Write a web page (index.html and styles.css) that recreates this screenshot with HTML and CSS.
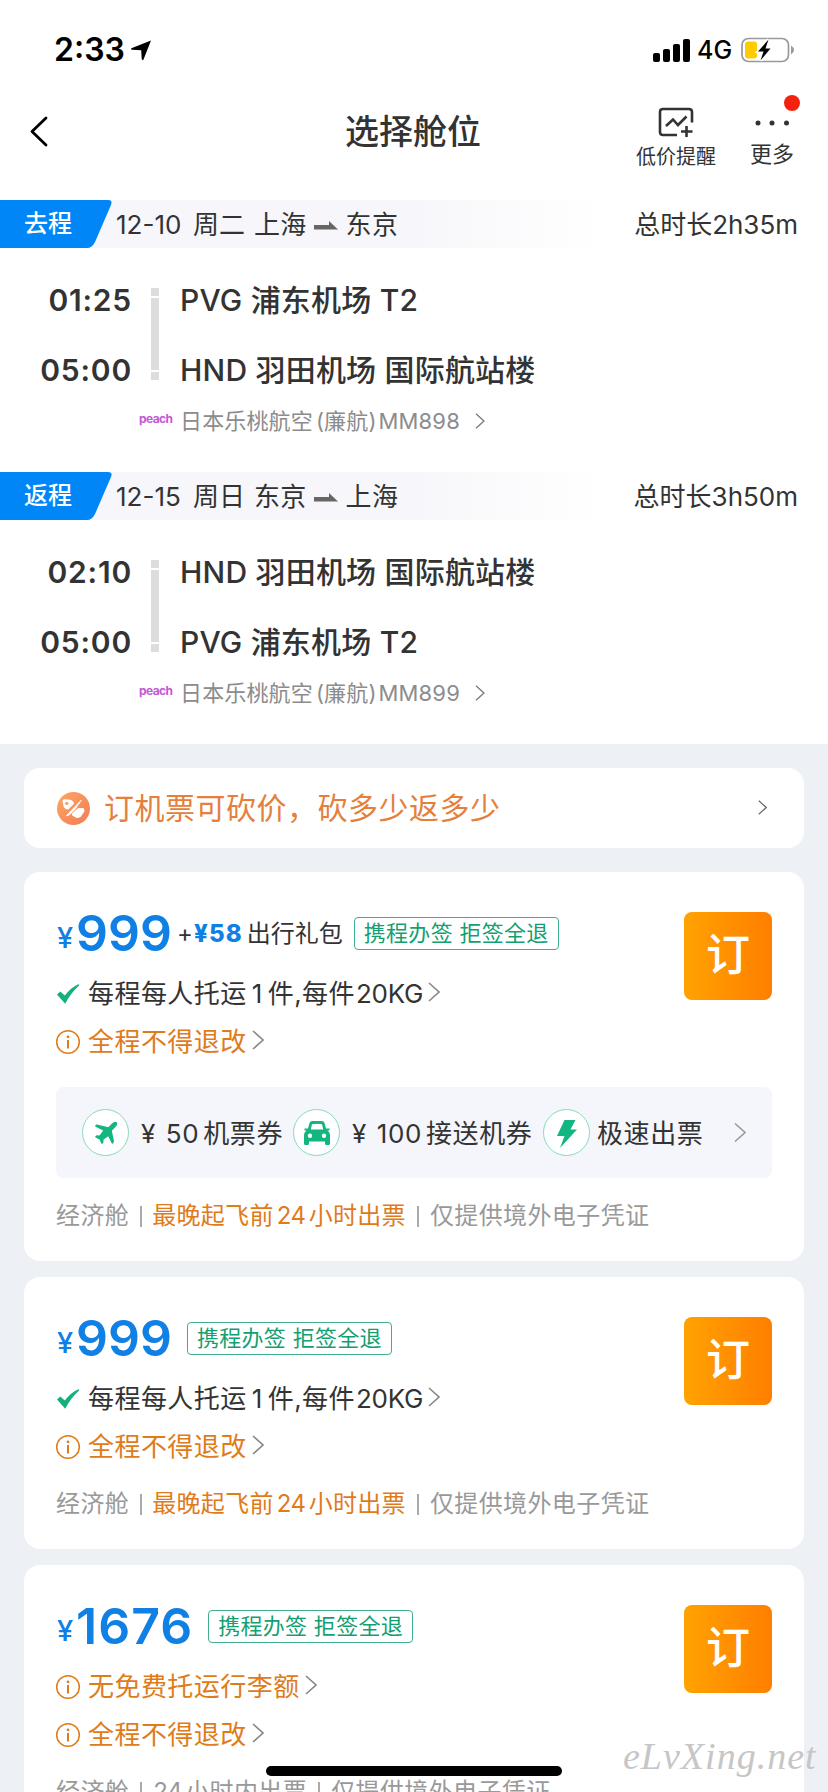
FILE: index.html
```html
<!DOCTYPE html>
<html lang="zh-CN">
<head>
<meta charset="utf-8">
<title>选择舱位</title>
<link rel="stylesheet" href="styles.css">
</head>
<body>
<svg class="defs" width="0" height="0">
  <symbol id="chev" viewBox="0 0 12 20"><path d="M1 1L11 10L1 19" fill="none" stroke="currentColor" stroke-width="1.6"/></symbol>
  <symbol id="info" viewBox="0 0 26 26"><circle cx="13" cy="13" r="11.3" fill="none" stroke="currentColor" stroke-width="1.5"/><circle cx="13" cy="7.8" r="1.4" fill="currentColor"/><path d="M13 11V19.5" stroke="currentColor" stroke-width="2"/></symbol>
  <symbol id="check" viewBox="0 0 22 20"><path d="M0 10.500L3.300 7.500L7.800 11.500C11 7 16 2.600 21.800 0L22 1.500C16.500 6.500 12 12.500 8.200 19.700Z" fill="#13b07c"/></symbol>
  <symbol id="arrow" viewBox="0 0 24 9"><path d="M0 4H15V0L24 8.500H0Z" fill="#666"/></symbol>
  <symbol id="track" viewBox="0 0 8 92"><path d="M0 0H8V8H0ZM0 10H8V82H0ZM0 84H8V92H0Z" fill="#ddd"/></symbol>
</svg>
<div class="screen">
  <div class="status">
    <span class="clock">2:33</span>
    <svg class="loc" viewBox="0 0 20 20"><path d="M20 0.500L12.500 19.500Q11.500 21 10.700 19L10.200 10.300L1 9.800Q-1 9 1 8Z"/></svg>
    <svg class="signal" viewBox="0 0 37 23"><rect x="0" y="14" width="7" height="9" rx="2"/><rect x="10" y="10" width="7" height="13" rx="2"/><rect x="20" y="5" width="7" height="18" rx="2"/><rect x="30" y="0" width="7" height="23" rx="2"/></svg>
    <span class="net">4G</span>
    <svg class="battery" viewBox="0 0 54 26"><rect x="1" y="1.500" width="46.500" height="23" rx="6.500" fill="none" stroke="#999" stroke-width="1.700"/><path d="M50 8.500Q53 10.500 53 13T50 17.500Z" fill="#999"/><rect x="4" y="4.500" width="12" height="17" rx="3" fill="#fc0"/><path d="M27.500 2.500L17 14.500H22.500L19.500 23.500L29.500 11.500H24.500Z" fill="#000" stroke="#fff" stroke-width="3" paint-order="stroke"/></svg>
  </div>
  <div class="nav">
    <svg class="back" viewBox="0 0 18 31"><path d="M16 2L2 15.500L16 29" fill="none" stroke="#000" stroke-width="2.800" stroke-linecap="round" stroke-linejoin="round"/></svg>
    <h1 class="title">选择舱位</h1>
    <div class="tool alert">
      <svg viewBox="0 0 36 30"><path d="M19 28H5Q2 28 2 25V5Q2 2 5 2H31Q34 2 34 5V15.500" fill="none" stroke="#333" stroke-width="2.600"/><path d="M8 19L15 12.500L20 18L28.500 9.500" fill="none" stroke="#333" stroke-width="2.600"/><path d="M28.500 19V30M23 24.500H34.500" stroke="#333" stroke-width="2.600"/></svg>
      <span>低价提醒</span>
    </div>
    <div class="tool more">
      <svg viewBox="0 0 36 8"><circle cx="4" cy="4" r="2.500" fill="#333"/><circle cx="18" cy="4" r="2.500" fill="#333"/><circle cx="32.500" cy="4" r="2.500" fill="#333"/></svg>
      <span>更多</span>
      <i class="dot"></i>
    </div>
  </div>

  <section class="leg">
    <div class="band">
      <div class="tag"><svg viewBox="0 0 112 48"><path d="M0 0H108Q113 0 111 5L95 42Q92 48 87 48H0Z" fill="#0086f6"/></svg><span>去程</span></div>
      <span class="date">12-10</span><span class="day">周二</span><span class="city">上海</span><svg class="arrow"><use href="#arrow"/></svg><span class="city">东京</span>
      <span class="total">总时长2h35m</span>
    </div>
    <div class="route">
      <div class="times"><span>01:25</span><span>05:00</span></div>
      <svg class="track"><use href="#track"/></svg>
      <div class="ports"><span>PVG 浦东机场 T2</span><span>HND 羽田机场 国际航站楼</span></div>
    </div>
    <div class="airline"><span class="peach">peach</span><span class="flight">日本乐桃航空<b>(廉航)</b>MM898</span><svg class="chev"><use href="#chev"/></svg></div>
  </section>

  <section class="leg">
    <div class="band">
      <div class="tag"><svg viewBox="0 0 112 48"><path d="M0 0H108Q113 0 111 5L95 42Q92 48 87 48H0Z" fill="#0086f6"/></svg><span>返程</span></div>
      <span class="date">12-15</span><span class="day">周日</span><span class="city">东京</span><svg class="arrow"><use href="#arrow"/></svg><span class="city">上海</span>
      <span class="total">总时长3h50m</span>
    </div>
    <div class="route">
      <div class="times"><span>02:10</span><span>05:00</span></div>
      <svg class="track"><use href="#track"/></svg>
      <div class="ports"><span>HND 羽田机场 国际航站楼</span><span>PVG 浦东机场 T2</span></div>
    </div>
    <div class="airline"><span class="peach">peach</span><span class="flight">日本乐桃航空<b>(廉航)</b>MM899</span><svg class="chev"><use href="#chev"/></svg></div>
  </section>

  <main class="list">
    <div class="promo">
      <svg class="coupon" viewBox="0 0 32 32"><defs><linearGradient id="cg" x1="0" y1="0" x2="1" y2="1"><stop offset="0" stop-color="#fba765"/><stop offset="1" stop-color="#f47b57"/></linearGradient></defs><circle cx="16" cy="16" r="16" fill="url(#cg)"/><path d="M5.500 9.500Q5 7 7.500 7L13 7.500Q16.500 9 16.500 11.500L11 17Q8 17 6.500 14.500Z" fill="#fff"/><circle cx="9.500" cy="11" r="1.600" fill="#f99d62"/><path d="M23.500 8L9 23L11.500 22.500L17 17.500Z" fill="#fff" stroke="#fff" stroke-width=".8"/><path d="M20.500 15.500H25.500Q27 16.500 26.500 19L23 24Q21.500 25.500 18.500 25L14.500 22.500Q14 21.500 15 20.500Z" fill="#fff"/></svg>
      <span>订机票可砍价，砍多少返多少</span>
      <svg class="chev"><use href="#chev"/></svg>
    </div>

    <article class="card">
      <button class="book">订</button>
      <div class="price"><i>¥</i><strong>999</strong><span class="gift"><span class="plus">+</span><b>¥58</b>出行礼包</span><span class="visa">携程办签 拒签全退</span></div>
      <div class="row"><svg class="check"><use href="#check"/></svg><span>每程每人托运<em>1</em>件,每件<em class="kg">20KG</em></span><svg class="chev"><use href="#chev"/></svg></div>
      <div class="row warn"><svg class="info"><use href="#info"/></svg><span>全程不得退改</span><svg class="chev"><use href="#chev"/></svg></div>
      <div class="perks">
        <div class="ring"><svg viewBox="0 0 24 24"><path d="M22.800 1.200Q24 3.500 21.500 6L17.800 9.700L20 20Q19.500 23.500 17.800 22.500L14.300 15.200L9.500 18.500L9.500 21.300Q8.500 23.500 7.300 22.500L5.500 18.500L1.500 16.500Q0.500 15 2.700 14.200L5.500 14.500L9.200 9.400L1.500 5.800Q0.500 4 3 3.500L14.300 6.200L18 2.500Q20.500 0 22.800 1.200Z" fill="#13b581"/></svg></div>
        <span class="p1">¥ 50<em></em>机票券</span>
        <div class="ring"><svg class="car" viewBox="0 0 26 24"><path fill-rule="evenodd" d="M8.500 0H17.500Q20 0 20.500 2L22 7.500H25.500V9.500H23.500Q26 11 26 14V22.500Q26 24 24.500 24H22.500Q21 24 21 22.500V20.500H5V22.500Q5 24 3.500 24H1.500Q0 24 0 22.500V14Q0 11 2.500 9.500H0.500V7.500H4L5.500 2Q6 0 8.500 0ZM9 3Q8 3 7.800 4L6.800 8.500H19.200L18.200 4Q18 3 17 3ZM6 12.500A2.200 2.200 0 1 0 6 16.900A2.200 2.200 0 1 0 6 12.500ZM20 12.500A2.200 2.200 0 1 0 20 16.900A2.200 2.200 0 1 0 20 12.500Z" fill="#13b581"/></svg></div>
        <span class="p2">¥ 100<em></em>接送机券</span>
        <div class="ring"><svg class="bolt" viewBox="0 0 20 28"><path d="M7.500 0H18.500L13.500 9.500H20L3 28L7.500 16H0Z" fill="#13b581"/></svg></div>
        <span class="p3">极速出票</span>
        <svg class="chev"><use href="#chev"/></svg>
      </div>
      <div class="foot"><span>经济舱</span><i></i><span class="hot">最晚起飞前<em>24</em>小时出票</span><i></i><span>仅提供境外电子凭证</span></div>
    </article>

    <article class="card">
      <button class="book">订</button>
      <div class="price"><i>¥</i><strong>999</strong><span class="visa">携程办签 拒签全退</span></div>
      <div class="row"><svg class="check"><use href="#check"/></svg><span>每程每人托运<em>1</em>件,每件<em class="kg">20KG</em></span><svg class="chev"><use href="#chev"/></svg></div>
      <div class="row warn"><svg class="info"><use href="#info"/></svg><span>全程不得退改</span><svg class="chev"><use href="#chev"/></svg></div>
      <div class="foot"><span>经济舱</span><i></i><span class="hot">最晚起飞前<em>24</em>小时出票</span><i></i><span>仅提供境外电子凭证</span></div>
    </article>

    <article class="card">
      <button class="book">订</button>
      <div class="price"><i>¥</i><strong class="wide">1676</strong><span class="visa">携程办签 拒签全退</span></div>
      <div class="row warn"><svg class="info"><use href="#info"/></svg><span>无免费托运行李额</span><svg class="chev"><use href="#chev"/></svg></div>
      <div class="row warn"><svg class="info"><use href="#info"/></svg><span>全程不得退改</span><svg class="chev"><use href="#chev"/></svg></div>
      <div class="foot"><span>经济舱</span><i></i><span><em class="lead">24</em>小时内出票</span><i></i><span>仅提供境外电子凭证</span></div>
    </article>
  </main>
  <div class="home"></div>
  <div class="mark">eLvXing.net</div>
</div>
</body>
</html>
```
FILE: styles.css
```css
* { box-sizing: border-box; }
body { margin: 0; background: #fff; color: #333; font-family: Inter, "Noto Sans CJK SC", sans-serif; line-height: 1.2; }
svg { display: block; flex: none; overflow: visible; }
i, em { font-style: normal; }
span { white-space: nowrap; }
.defs { position: absolute; }
.screen { position: relative; width: 828px; height: 1792px; overflow: hidden; }

.status { display: flex; align-items: center; height: 100px; padding: 0 33px 0 54px; }
.clock { width: 77px; font-size: 32px; font-weight: 600; color: #000; }
.loc { width: 20px; height: 20px; }
.signal { width: 37px; height: 23px; margin-left: auto; }
.net { width: 43px; padding-left: 7px; font-size: 25px; font-weight: 500; color: #000; }
.battery { width: 54px; height: 26px; margin-left: 8px; }

.nav { display: flex; height: 100px; padding-left: 30px; }
.back { width: 18px; height: 31px; margin-top: 16px; }
.title { width: 136px; margin: 7px 0 0 297px; font-size: 34px; font-weight: 500; line-height: 50px; white-space: nowrap; }
.tool { position: relative; display: flex; flex-direction: column; align-items: center; font-size: 20px; }
.tool span { line-height: 24px; }
.alert { width: 80px; margin-left: 155px; }
.alert svg { width: 36px; height: 30px; margin: 7px 0 8px; }
.more { width: 46px; margin-left: 33px; font-size: 22px; }
.more svg { width: 36px; height: 8px; margin: 19px 0 15px; }
.dot { position: absolute; left: 35px; top: -5px; width: 16px; height: 16px; border-radius: 50%; background: #f5210f; }

.leg { height: 272px; }
.band { display: flex; align-items: center; height: 48px; padding-right: 30px; font-size: 26px; background: linear-gradient(90deg, #f7f7fb 50%, #fff 73%); }
.band > span { padding-top: 2px; }
.tag { position: relative; width: 112px; height: 48px; margin-right: 4px; }
.tag svg { width: 112px; height: 48px; }
.tag span { position: absolute; left: 24px; top: 0; line-height: 48px; font-size: 24px; font-weight: 500; color: #fff; }
.date { width: 77px; }
.day { width: 61px; }
.city { letter-spacing: .3px; }
.arrow { width: 24px; height: 9px; margin: 2px 8px 0 7px; }
.total { margin-left: auto; }
.route { display: flex; padding-top: 33px; font-size: 30px; font-weight: 500; line-height: 36px; }
.times { display: flex; flex-direction: column; gap: 34px; width: 132px; padding-top: 1px; text-align: right; font-weight: 600; letter-spacing: .8px; }
.track { width: 8px; height: 92px; margin: 7px 21px 0 19px; }
.ports { display: flex; flex-direction: column; gap: 34px; padding-top: 1px; letter-spacing: .2px; }
.airline { display: flex; align-items: center; height: 30px; margin-top: 18px; padding-left: 139px; font-size: 22px; color: #8c8c8c; }
.peach { width: 41px; margin-top: -4px; font-size: 12px; font-weight: 700; letter-spacing: -.6px; color: #c457d6; }
.flight { letter-spacing: .15px; }
.flight b { margin: 0 2px 0 3px; font-weight: 400; }
.airline .chev { width: 10px; height: 16px; margin-left: 15px; color: #777; }

.list { height: 1048px; padding: 24px 24px 0; background: #edf0f5; }
.promo { display: flex; align-items: center; height: 80px; margin-bottom: 24px; padding: 0 37px 0 33px; border-radius: 16px; background: #fff; font-size: 30px; letter-spacing: .5px; color: #e57f3c; }
.coupon { width: 33px; height: 33px; margin-right: 14px; }
.promo .chev { width: 9px; height: 15px; margin: -2px 0 0 auto; color: #666; }

.card { position: relative; margin-bottom: 16px; padding: 25px 32px 22px; border-radius: 16px; background: #fff; }
.book { position: absolute; right: 32px; top: 40px; width: 88px; height: 88px; padding: 0 0 8px; border: 0; border-radius: 8px; background: linear-gradient(90deg, #ffa200, #ff7f00); color: #fff; font: 500 44px/80px "Noto Sans CJK SC", sans-serif; }
.price { display: flex; align-items: center; height: 72px; color: #1080e4; }
.price > i { width: 20px; margin-top: 10px; padding-left: 1px; font-size: 29px; font-weight: 500; }
.price strong { font-size: 50px; font-weight: 600; }
.price .wide { letter-spacing: 1px; }
.gift { display: flex; margin-left: 5px; padding-top: 2px; font-size: 24px; color: #333; }
.plus { width: 17px; }
.gift b { margin-right: 4px; font-weight: 800; letter-spacing: 1.1px; color: #1080e4; }
.visa { height: 33px; margin-left: 11px; padding: 0 9px; border: 1px solid #3fae8c; border-radius: 4px; font-size: 22px; line-height: 31px; letter-spacing: .3px; color: #149f72; }
strong + .visa { margin-left: 15px; }
.row { display: flex; align-items: center; height: 48px; font-size: 26px; letter-spacing: .45px; }
.row span { padding-top: 2px; }
.row em { margin: 0 5px; }
.row .chev { width: 12px; height: 20px; margin: -2px 0 0 5px; color: #888; }
.row .kg { margin: 0 0 0 1px; letter-spacing: -.3px; }
.check { width: 22px; height: 20px; margin: 2px 9px 0 1px; }
.info { width: 26px; height: 26px; margin: 1px 7px 0 -1px; }
.warn { color: #e07b1b; }
.perks { display: flex; align-items: center; height: 91px; margin: 22px 0 -2px; padding: 0 26px; border-radius: 8px; background: #f4f6fb; font-size: 26px; letter-spacing: .6px; }
.perks span { padding-top: 2px; word-spacing: 2px; }
.ring { display: flex; flex: none; align-items: center; justify-content: center; width: 47px; height: 47px; border: 1px solid #8bd8bf; border-radius: 50%; background: #fff; }
.ring svg { width: 24px; height: 24px; }
.ring .car { width: 26px; }
.ring .bolt { width: 20px; height: 28px; margin-top: 3px; }
.perks em { margin-left: 4px; }
.p1 { width: 152px; margin-left: 12px; }
.p2 { width: 191px; margin-left: 12px; }
.p3 { margin-left: 7px; }
.perks .chev { width: 12px; height: 23px; margin-left: auto; color: #999; }
.foot { display: flex; align-items: center; height: 48px; margin-top: 9px; font-size: 24px; letter-spacing: .4px; color: #999; }
.foot span { padding-top: 2px; }
.perks + .foot { margin-top: 15px; }
.foot i { width: 2px; height: 21px; margin: 2px 11px 0; background: #aaa; }
.foot em { margin: 0 3px; letter-spacing: -.4px; }
.foot .lead { margin-left: 0; }
.foot .hot { margin-left: -1px; letter-spacing: .3px; }
.hot { color: #e07b1b; }
.home { position: absolute; left: 266px; top: 1766px; width: 296px; height: 10px; border-radius: 5px; background: #000; }
.mark { position: absolute; left: 623px; top: 1733px; font: italic 38px/46px Z003, "URW Chancery L", "Liberation Serif", cursive; color: #c6c6c6; letter-spacing: 1px; }
```
